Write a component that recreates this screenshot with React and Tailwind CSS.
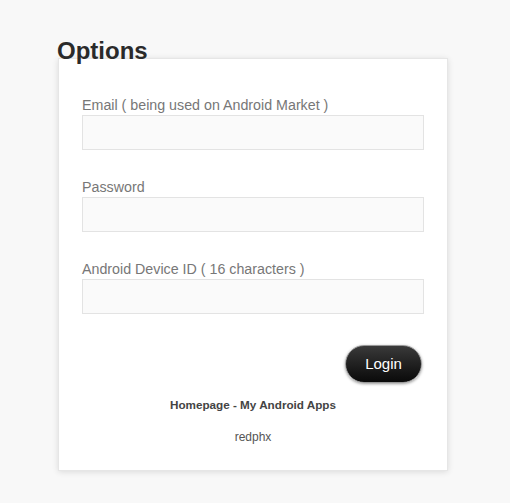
import React from "react";

function Field({ label, type = "text" }) {
  return (
    <div className="flex flex-col">
      <label className="text-[14.25px] leading-[16px] text-[#777] mb-[2px]">{label}</label>
      <input
        type={type}
        className="h-[35px] w-full bg-[#fafafa] border border-[#e3e3e3] outline-none px-2 text-[14px]"
      />
    </div>
  );
}

export default function App() {
  return (
    <div className="min-h-screen w-full bg-[#f8f8f8] pt-[37px] pl-[57px]" style={{ fontFamily: '"Liberation Sans", Arial, sans-serif' }}>
      <h1 className="relative z-10 text-[24px] leading-[28px] font-bold text-[#2a2a2a]">Options</h1>
      <div className="-mt-[7px] ml-px w-[390px] bg-white border border-[#e6e6e6] shadow-[0_1px_6px_rgba(0,0,0,0.12)] pt-[38px] pb-[26px] px-[23px]">
        <div className="flex flex-col gap-[29px]">
          <Field label="Email ( being used on Android Market )" />
          <Field label="Password" type="password" />
          <Field label="Android Device ID ( 16 characters )" />
        </div>
        <div className="flex justify-end mt-[31px] pr-[2px]">
          <button className="w-[77px] h-[38px] rounded-full bg-gradient-to-b from-[#3a3a3a] to-[#0a0a0a] border border-[#999] shadow-[0_1px_3px_rgba(0,0,0,0.4)] text-white text-[15px]">
            Login
          </button>
        </div>
        <div className="mt-[15px] text-center text-[11.7px] leading-[14px] font-bold text-[#444]">
          Homepage - My Android Apps
        </div>
        <div className="mt-[18px] text-center text-[12px] leading-[14px] text-[#555]">redphx</div>
      </div>
    </div>
  );
}
